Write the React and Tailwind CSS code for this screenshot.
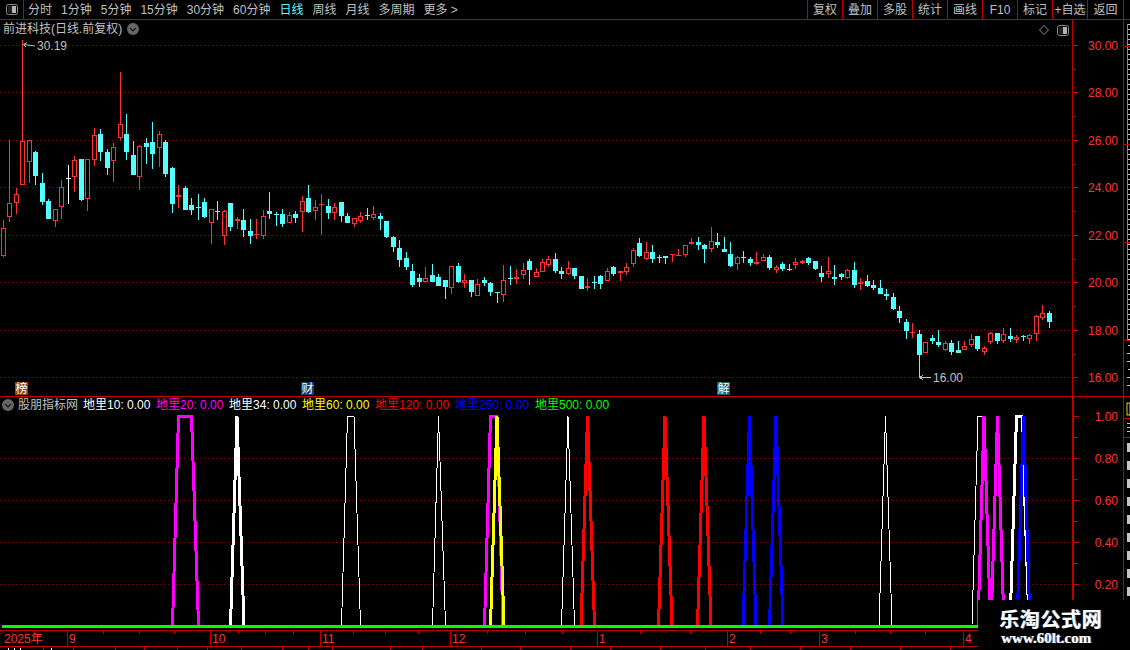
import React from 'react';

const RED = '#ff3232';
const CYAN = '#54ffff';
const LINE = '#c00000';
const DOT = '#800000';

// candles, read off the chart at 3x: [x, type, high, top, bottom, low]
const groupA = [
  [10, 'r', 480, 505, 587, 590], [28, 'r', 240, 430, 470, 485], [49, 'r', 385, 403, 430, 462], [67, 'r', -60, 244, 374, 374],
  [88, 'r', 240, 241, 305, 368], [106, 'c', 273, 276, 347, 375], [127, 'c', 339, 369, 426, 435], [145, 'c', 418, 423, 477, 477],
  [166, 'r', 447, 447, 483, 500], [184, 'r', 360, 382, 440, 477], [205, 'w', 315, 355, 356, 432], [223, 'r', 288, 301, 350, 396],
  [244, 'c', 297, 297, 420, 423], [262, 'r', 297, 298, 416, 453], [283, 'r', 204, 226, 299, 318], [301, 'c', 207, 222, 276, 303],
  [322, 'c', 267, 276, 324, 345], [340, 'r', 249, 262, 302, 366], [361, 'r', 36, 193, 235, 240], [379, 'c', 162, 222, 276, 300],
  [400, 'c', 243, 285, 345, 345], [418, 'r', 255, 259, 350, 390], [439, 'c', 234, 249, 261, 312], [457, 'c', 186, 246, 282, 327],
  [478, 'r', 213, 223, 263, 321], [496, 'c', 240, 246, 342, 350], [517, 'c', 321, 324, 432, 459], [535, 'r', 375, 406, 412, 444],
  [556, 'c', 378, 384, 450, 450], [574, 'c', 414, 435, 450, 465], [595, 'c', 402, 441, 443, 480], [613, 'c', 414, 426, 471, 474],
  [634, 'r', 447, 448, 488, 552], [652, 'c', 423, 453, 455, 480], [673, 'r', 450, 454, 527, 555], [691, 'c', 429, 429, 501, 513],
  [712, 'r', 471, 478, 484, 507], [730, 'c', 447, 480, 510, 531], [751, 'c', 477, 513, 528, 552], [769, 'r', 477, 523, 526, 537],
  [790, 'r', 450, 468, 527, 537], [808, 'c', 396, 453, 462, 477], [829, 'c', 456, 462, 464, 498], [847, 'c', 447, 462, 492, 501],
  [868, 'r', 456, 466, 488, 489], [886, 'c', 453, 462, 474, 489], [907, 'r', 408, 424, 455, 516], [925, 'c', 375, 414, 456, 459],
  [946, 'r', 420, 442, 452, 480], [964, 'r', 402, 433, 435, 525], [985, 'c', 417, 438, 459, 477], [1003, 'r', 429, 442, 458, 480],
  [1024, 'c', 426, 426, 468, 486], [1042, 'c', 459, 468, 489, 489], [1063, 'r', 474, 475, 491, 501], [1081, 'r', 456, 469, 483, 489],
  [1102, 'c', 444, 465, 467, 480], [1120, 'r', 438, 463, 473, 480],
];

const groupB = [
  [2, 'c', 39, 48, 57, 90], [19, 'c', 63, 63, 111, 114], [40, 'c', 108, 111, 141, 156], [58, 'c', 120, 144, 180, 201],
  [79, 'c', 156, 174, 201, 210], [97, 'c', 192, 213, 255, 261], [118, 'c', 222, 234, 246, 261], [136, 'r', 201, 235, 245, 246],
  [157, 'c', 192, 225, 246, 246], [175, 'c', 222, 231, 258, 258], [196, 'c', 240, 240, 261, 297], [214, 'r', 198, 199, 265, 282],
  [235, 'c', 189, 198, 246, 249], [253, 'r', 222, 241, 248, 264], [274, 'c', 240, 240, 276, 291], [292, 'r', 237, 253, 287, 288],
  [313, 'c', 231, 240, 249, 258], [331, 'c', 246, 249, 276, 288], [352, 'c', 276, 276, 278, 309], [370, 'r', 195, 241, 284, 306],
  [391, 'c', 198, 235, 237, 255], [409, 'r', 207, 232, 236, 252], [430, 'r', 189, 211, 224, 237], [448, 'c', 177, 183, 210, 255],
  [469, 'r', 204, 215, 230, 231], [487, 'r', 177, 187, 215, 216], [505, 'r', 168, 178, 194, 201], [526, 'c', 159, 177, 213, 219],
  [544, 'c', 201, 213, 222, 237], [565, 'r', 183, 205, 221, 225], [583, 'c', 204, 204, 228, 237], [604, 'c', 228, 228, 267, 267],
  [622, 'r', 234, 259, 265, 273], [643, 'c', 228, 246, 248, 267], [661, 'c', 225, 228, 252, 267], [682, 'r', 204, 214, 242, 243],
  [700, 'c', 198, 201, 222, 228], [721, 'r', 214, 214, 218, 243], [739, 'r', 189, 202, 215, 225], [760, 'r', 144, 151, 191, 201],
  [778, 'c', 114, 129, 168, 171], [799, 'r', 126, 157, 176, 180], [817, 'c', 135, 156, 177, 189], [838, 'c', 165, 171, 173, 189],
  [856, 'c', 168, 168, 174, 192], [877, 'r', 162, 163, 165, 186], [895, 'r', 147, 164, 167, 168], [916, 'r', 135, 136, 166, 170],
  [934, 'r', 114, 127, 133, 135], [955, 'c', 111, 126, 135, 150], [973, 'c', 132, 135, 147, 189], [994, 'r', 81, 124, 146, 156],
  [1012, 'c', 99, 126, 135, 144], [1033, 'c', 111, 147, 156, 156], [1051, 'c', 126, 162, 198, 201], [1072, 'r', 168, 172, 191, 210],
  [1090, 'c', 153, 171, 173, 189], [1111, 'c', 171, 177, 189, 198], [1129, 'r', 156, 187, 193, 195],
];

const groupC = [
  [10, 'r', 102, 111, 122, 123], [28, 'c', 105, 111, 144, 150], [49, 'r', 135, 142, 149, 159], [67, 'c', 126, 132, 147, 153],
  [88, 'c', 132, 148, 150, 153], [106, 'r', 114, 127, 134, 147], [127, 'r', 120, 124, 128, 132], [145, 'c', 111, 114, 129, 135],
  [166, 'c', 123, 123, 147, 150], [184, 'c', 138, 159, 171, 186], [205, 'r', 111, 154, 161, 174], [223, 'c', 135, 171, 177, 195],
  [244, 'c', 159, 163, 171, 180], [262, 'r', 147, 151, 174, 177], [283, 'c', 126, 150, 195, 204], [301, 'r', 174, 185, 193, 210],
  [322, 'c', 165, 183, 198, 201], [340, 'c', 180, 195, 204, 210], [361, 'c', 180, 204, 222, 222], [379, 'c', 207, 222, 228, 240],
  [400, 'c', 219, 231, 267, 270], [418, 'c', 258, 273, 294, 309], [439, 'c', 297, 306, 333, 357], [457, 'r', 309, 336, 338, 354],
  [478, 'c', 330, 342, 405, 474], [496, 'r', 366, 367, 398, 399], [517, 'c', 345, 354, 363, 372], [535, 'c', 330, 366, 375, 381],
  [556, 'r', 363, 370, 390, 393], [574, 'c', 360, 369, 396, 405], [595, 'c', 363, 390, 399, 399], [613, 'r', 363, 379, 389, 390],
  [634, 'r', 342, 358, 375, 381], [652, 'c', 348, 348, 387, 393], [673, 'r', 378, 384, 396, 405], [691, 'r', 336, 340, 366, 372],
  [712, 'c', 339, 339, 363, 372], [730, 'r', 324, 343, 362, 369], [751, 'c', 324, 348, 357, 366], [769, 'r', 345, 352, 359, 369],
  [790, 'c', 345, 348, 350, 363], [808, 'r', 342, 344, 356, 372], [829, 'r', 285, 289, 341, 363], [847, 'r', 255, 280, 293, 300],
  [868, 'c', 273, 279, 306, 324],
];

const candles = [
  ...groupA.map((c) => [c, 0, 60]),
  ...groupB.map((c) => [c, 380, 200]),
  ...groupC.map((c) => [c, 760, 220]),
];

const priceGrid = [45, 92, 140, 187, 235, 282, 330, 377];
const priceLabels = ['30.00', '28.00', '26.00', '24.00', '22.00', '20.00', '18.00', '16.00'];
const subGrid = [458, 500, 542, 584];
const subLabels = [[416, '1.00'], [458, '0.80'], [500, '0.60'], [542, '0.40'], [584, '0.20']];

// peaks of the lower chart: left foot, top left, top right, right foot
const peaks = [
  { color: '#ffffff', width: 1, list: [[341.5, 347.5, 354, 360.5], [432.5, 438.5, 438.5, 445.5], [561.5, 568, 568, 574.5], [879, 885.5, 885.5, 892], [972, 978, 984, 990]] },
  { color: '#ff00ff', width: 3, list: [[172.5, 178.5, 191.5, 198.5], [484.5, 490.5, 497, 503], [978, 984, 984, 990.5], [991, 997.5, 997.5, 1004]] },
  { color: '#ffffff', width: 3, list: [[230.5, 237, 237, 244], [1010, 1016.5, 1022, 1029]] },
  { color: '#ffff00', width: 3, list: [[490.5, 497, 497, 504]] },
  { color: '#ff0000', width: 3, list: [[581, 587.5, 587.5, 594.5], [658.5, 665, 665, 672], [697.5, 704, 704, 711]] },
  { color: '#0000ff', width: 3, list: [[743, 749.5, 749.5, 756], [769.5, 776, 776, 783], [1017, 1023.5, 1023.5, 1030]] },
];

const indicators = [
  { name: '地里10', value: '0.00', className: 'w-[73px] text-white' },
  { name: '地里20', value: '0.00', className: 'w-[73px] text-[#ff00ff]' },
  { name: '地里34', value: '0.00', className: 'w-[73px] text-white' },
  { name: '地里60', value: '0.00', className: 'w-[73px] text-[#ffff00]' },
  { name: '地里120', value: '0.00', className: 'w-[80px] text-[#ff0000]' },
  { name: '地里250', value: '0.00', className: 'w-[80px] text-[#0000ff]' },
  { name: '地里500', value: '0.00', className: 'w-[80px] text-[#00ff00]' },
];

const periods = ['分时', '1分钟', '5分钟', '15分钟', '30分钟', '60分钟', '日线', '周线', '月线', '多周期', '更多 >'];
const actions = ['复权', '叠加', '多股', '统计', '画线', 'F10', '标记', '+自选'];

const months = [[67, '9'], [210, '10'], [320, '11'], [450, '12'], [597, '1'], [727, '2'], [819, '3'], [963, '4']];
const minorTicks = [103, 139, 174, 238, 265, 293, 353, 385, 418, 487, 525, 562, 640, 690, 760, 790, 855, 890, 925];
const lowerTicks = [43, 73, 115, 144, 177, 207, 241, 282, 308, 332, 390, 422, 481, 520, 570, 610, 660, 705, 750, 800, 850, 900, 950];

const PanelIcon = ({ className }) => (
  <svg className={className} width="12" height="11" viewBox="0 0 12 11">
    <rect x="0.5" y="0.5" width="11" height="10" rx="2" fill="none" stroke="#8c8c8c" />
    <rect x="2" y="2" width="4" height="7" fill="#222222" />
    <rect x="6" y="2" width="4" height="7" fill="#b4b4b4" />
  </svg>
);

const RoundChevron = ({ size = 12 }) => (
  <svg width={size} height={size} viewBox="0 0 12 12" className="shrink-0">
    <circle cx="6" cy="6" r="6" fill="#666666" />
    <path d="M3 4.8 L6 7.8 L9 4.8" fill="none" stroke="#111111" strokeWidth="1.2" />
  </svg>
);

const Candle = ({ data, ox, oy }) => {
  const [zx, type, hi, top, bot, lo] = data;
  const x = Math.round(ox + zx / 3 - 0.4);
  const y = (v) => Math.round(oy + v / 3);
  const color = type === 'c' ? CYAN : type === 'w' ? '#ffffff' : RED;
  const h = y(bot) - y(top);
  return (
    <g shapeRendering="crispEdges">
      <rect x={x} y={y(hi)} width="1" height={Math.max(y(lo) - y(hi), 1)} fill={color} />
      {h <= 1 ? (
        <rect x={x - 2} y={y(top)} width="5" height="1" fill={color} />
      ) : type === 'c' ? (
        <rect x={x - 2} y={y(top)} width="5" height={h} fill={color} />
      ) : (
        <rect x={x - 1.5} y={y(top) + 0.5} width="4" height={h - 1} fill="#000000" stroke={color} />
      )}
    </g>
  );
};

const Badge = ({ x, bg, children }) => (
  <g>
    <rect x={x} y="382" width="13" height="13" fill={bg} />
    <text x={x + 0.5} y="393" fontSize="12" fill="#ffffff">{children}</text>
  </g>
);

const StripTicks = ({ from, to, step }) => {
  const rows = [];
  for (let y = from; y < to; y += step) {
    rows.push(<rect key={y} x={y % 3 === 0 ? 4 : 3} y={y} width={y % 2 === 0 ? 3 : 4} height="1" fill="#c4c4c4" />);
  }
  return rows;
};

function App() {
  return (
    <div className="relative flex h-[650px] w-[1130px] flex-col overflow-hidden bg-black font-['Liberation_Sans','Noto_Sans_CJK_SC',sans-serif] text-xs leading-none text-[#c0c0c0]">
      {/* Toolbar */}
      <div className="flex h-5 shrink-0 items-stretch border-b border-[#c00000]">
        <div className="flex w-6 items-center justify-center border-r border-[#c00000]">
          <PanelIcon />
        </div>
        <div className="ml-1 flex flex-1 items-center gap-[9px]">
          {periods.map((p) => (
            <span key={p} className={p === '日线' ? 'text-[#54ffff]' : ''}>{p}</span>
          ))}
        </div>
        <div className="flex items-stretch">
          {actions.map((a) => (
            <div key={a} className="flex w-[35px] items-center justify-center border-l border-[#c00000]">{a}</div>
          ))}
          <div className="flex w-[37px] items-center justify-center border-x border-[#c00000]">返回</div>
          <div className="w-[6px]" />
        </div>
      </div>

      {/* Price panel */}
      <div className="flex h-[377px] shrink-0 border-b border-[#c00000]">
        <div className="relative w-[1072px]">
          <svg width="1072" height="376" viewBox="0 20 1072 376" className="block">
            {priceGrid.map((y) => (
              <line key={y} x1="0" x2="1072" y1={y + 0.5} y2={y + 0.5} stroke={DOT} strokeDasharray="1 3" shapeRendering="crispEdges" />
            ))}
            {candles.map(([c, ox, oy], i) => <Candle key={i} data={c} ox={ox} oy={oy} />)}
            <path d="M23.5 44.5 L35 46 M23.5 44.5 L27 42.5 M23.5 44.5 L26 47" stroke="#c0c0c0" fill="none" />
            <text x="37" y="50" fontSize="12" fill="#c0c0c0">30.19</text>
            <path d="M920 377.5 L931 377.5 M920 377.5 L923 375 M920 377.5 L923 380" stroke="#c0c0c0" fill="none" shapeRendering="crispEdges" />
            <text x="933" y="382" fontSize="12" fill="#c0c0c0">16.00</text>
            <Badge x={15} bg="#8a4a12">榜</Badge>
            <Badge x={301} bg="#123f6b">财</Badge>
            <Badge x={717} bg="#14606e">解</Badge>
          </svg>
          <div className="absolute left-[3px] top-[3px] flex items-center gap-[5px]">
            <span>前进科技(日线.前复权)</span>
            <RoundChevron />
          </div>
          <svg width="10" height="10" viewBox="0 0 10 10" className="absolute left-[1039px] top-[5px]">
            <path d="M5 0.5 L9.5 5 L5 9.5 L0.5 5 Z" fill="none" stroke="#8c8c8c" />
          </svg>
          <PanelIcon className="absolute left-[1057px] top-[5px]" />
        </div>
        <div className="w-[51px] border-l border-[#c00000]">
          <svg width="50" height="376" viewBox="1073 20 50 376" className="block">
            {priceGrid.map((y, i) => (
              <g key={y}>
                <rect x="1073" y={y} width="5" height="1" fill={LINE} />
                <rect x="1073" y={y + 24} width="3" height="1" fill={LINE} />
                <text x="1118" y={y + 5} fontSize="12" textAnchor="end" fill={RED}>{priceLabels[i]}</text>
              </g>
            ))}
          </svg>
        </div>
        <div className="w-[7px] border-l border-[#c00000]">
          <svg width="6" height="376" viewBox="0 20 6 376" className="block">
            <StripTicks from={24} to={340} step={5} />
            <rect x="3" y="24" width="1" height="316" fill="#8a8a8a" />
            {[46, 144, 242, 340].map((y) => <rect key={y} x="0" y={y} width="6" height="1" fill={LINE} />)}
            <StripTicks from={345} to={392} step={8} />
          </svg>
        </div>
      </div>

      {/* Indicator panel */}
      <div className="flex h-[233px] shrink-0">
        <div className="relative w-[1072px]">
          <svg width="1072" height="233" viewBox="0 397 1072 233" className="block">
            {subGrid.map((y) => (
              <line key={y} x1="0" x2="1072" y1={y + 0.5} y2={y + 0.5} stroke={DOT} strokeDasharray="1 3" shapeRendering="crispEdges" />
            ))}
            {peaks.map((group) =>
              group.list.map(([a, b, c, d]) => (
                <polyline
                  key={group.color + group.width + a}
                  points={`${a},625 ${b},416.5 ${c},416.5 ${d},625`}
                  fill="none"
                  stroke={group.color}
                  strokeWidth={group.width}
                  shapeRendering="crispEdges"
                />
              ))
            )}
            <rect x="2" y="625" width="1070" height="3" fill="#00ff00" />
          </svg>
          <div className="absolute left-[2px] top-[2px] flex items-center">
            <RoundChevron />
            <span className="ml-1">股朋指标网</span>
            <div className="ml-[5px] flex">
              {indicators.map((ind) => (
                <span key={ind.name} className={ind.className}>{ind.name}: {ind.value}</span>
              ))}
            </div>
          </div>
        </div>
        <div className="w-[51px] border-l-2 border-[#c00000]">
          <svg width="49" height="233" viewBox="1074 397 49 233" className="block">
            {subLabels.map(([y, label]) => (
              <g key={y}>
                <rect x="1074" y={y} width="5" height="1" fill={LINE} />
                <rect x="1074" y={y + 21} width="3" height="1" fill={LINE} />
                <text x="1118" y={y + 5} fontSize="12" textAnchor="end" fill={RED}>{label}</text>
              </g>
            ))}
          </svg>
        </div>
        <div className="w-[7px] border-l border-[#c00000]">
          <svg width="6" height="233" viewBox="1124 397 6 233" className="block">
            <rect x="1127" y="403" width="3" height="12" fill="none" stroke="#d8d800" />
            <rect x="1124" y="418" width="6" height="1" fill={LINE} />
            <rect x="1127" y="423" width="3" height="1" fill="#c4c4c4" />
            <rect x="1127" y="427" width="3" height="1" fill="#c4c4c4" />
            <rect x="1127" y="431" width="3" height="1" fill="#c4c4c4" />
            <rect x="1124" y="437" width="6" height="1" fill={LINE} />
            {[443, 461, 479, 497, 515, 533, 551, 569, 587].map((y) => (
              <rect key={y} x="1127" y={y} width="3" height="9" fill="#c4c4c4" />
            ))}
          </svg>
        </div>
      </div>

      {/* Time axis */}
      <svg width="1130" height="20" viewBox="0 630 1130 20" className="block shrink-0">
        <rect x="0" y="630" width="1130" height="1" fill={LINE} />
        <rect x="0" y="646" width="1130" height="1" fill={LINE} />
        {minorTicks.map((x) => <rect key={x} x={x} y="631" width="1" height="3" fill={LINE} />)}
        {months.map(([x, label]) => (
          <g key={x}>
            <rect x={x} y="631" width="1" height="15" fill={LINE} />
            <text x={x + 2} y="643" fontSize="12" fill={RED}>{label}</text>
          </g>
        ))}
        <text x="4" y="643" fontSize="12" fill={RED}>2025年</text>
        {lowerTicks.map((x) => <rect key={x} x={x} y="647" width="1" height="3" fill={LINE} />)}
        <rect x="8" y="648" width="1" height="2" fill="#ffffff" />
        <rect x="14" y="648" width="1" height="2" fill="#ffffff" />
        <rect x="20" y="648" width="1" height="2" fill="#ffffff" />
        <rect x="51" y="648" width="1" height="2" fill="#ffffff" />
      </svg>

      {/* Watermark */}
      <div className="absolute left-[978px] top-[600px] flex h-[50px] w-[152px] flex-col items-start bg-black pl-[21px] pt-[10px]">
        <span className="text-[20px] font-bold tracking-[0.6px] text-white [text-shadow:1px_0_0_#6f93c4]">乐淘公式网</span>
        <span className="mt-[1px] ml-[2px] font-['Liberation_Serif',serif] text-[15px] font-bold text-white [text-shadow:1px_0_0_#6f93c4]">www.60lt.com</span>
      </div>
    </div>
  );
}

export default App;
